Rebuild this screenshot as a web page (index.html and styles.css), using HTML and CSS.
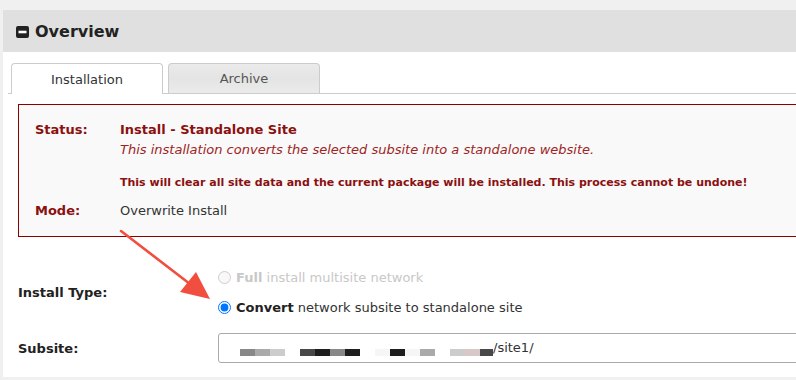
FILE: index.html
```html
<!DOCTYPE html>
<html lang="en">
<head>
<meta charset="utf-8">
<title>Overview</title>
<link rel="stylesheet" href="styles.css">
</head>
<body>
<div class="panel">
  <div class="panel-head">
    <svg class="head-icon" width="13" height="12" viewBox="0 0 13 12"><rect x="0" y="0" width="13" height="12" rx="2" fill="#222"/><rect x="2.5" y="4.7" width="8" height="2.6" fill="#fff"/></svg>
    <span class="head-title">Overview</span>
  </div>
  <div class="panel-body">
    <div class="tabs">
      <div class="tab active">Installation</div>
      <div class="tab">Archive</div>
    </div>
    <div class="status-box">
      <div class="srow">
        <div class="slabel">Status:</div>
        <div class="sval">
          <div class="stitle">Install - Standalone Site</div>
          <div class="sdesc">This installation converts the selected subsite into a standalone website.</div>
          <div class="swarn">This will clear all site data and the current package will be installed. This process cannot be undone!</div>
        </div>
      </div>
      <div class="srow mode">
        <div class="slabel">Mode:</div>
        <div class="sval plain">Overwrite Install</div>
      </div>
    </div>
    <div class="frow types">
      <div class="flabel">Install Type:</div>
      <div class="options">
        <label class="opt disabled"><input type="radio" name="t" disabled><span><b>Full</b> install multisite network</span></label>
        <label class="opt"><input type="radio" name="t" checked><span><b>Convert</b> network subsite to standalone site</span></label>
      </div>
    </div>
    <div class="frow subsite">
      <div class="flabel">Subsite:</div>
      <div class="field">
        <span class="px c88"></span><span class="px caa"></span><span class="px ccc"></span><span class="px"></span>
        <span class="px c48"></span><span class="px c1e"></span><span class="px c88"></span><span class="px c1e"></span><span class="px"></span>
        <span class="px cf6"></span><span class="px c1e"></span><span class="px cf6"></span><span class="px caa"></span><span class="px"></span>
        <span class="px ccc"></span><span class="px cpk"></span><span class="px c48 narrow"></span><span class="path">/site1/</span>
      </div>
    </div>
  </div>
</div>
<svg class="arrow" width="796" height="380" viewBox="0 0 796 380">
  <line x1="121" y1="231" x2="190" y2="284" stroke="#f24e3f" stroke-width="2.6" stroke-linecap="round"/>
  <polygon points="210,299 180,292 196,272" fill="#f24e3f"/>
</svg>
</body>
</html>
```

FILE: styles.css
```css
html, body {
  margin: 0;
  padding: 0;
}
body {
  background: #f0f0f0;
  width: 796px;
  height: 380px;
  overflow: hidden;
  position: relative;
  font-family: "DejaVu Sans", Verdana, sans-serif;
  font-size: 13px;
  color: #333;
}
.panel {
  margin: 10px 0 0 3px;
  width: 900px;
}
.panel-head {
  height: 42px;
  background: #e0e0e0;
  display: flex;
  align-items: center;
  padding-left: 13px;
}
.head-icon {
  margin-top: 2px;
}
.head-title {
  margin-left: 6px;
  font-size: 16px;
  font-weight: bold;
  color: #222;
}
.panel-body {
  background: #fff;
  padding: 11px 0 14px 0;
}
.tabs {
  margin-left: 5px;
  display: flex;
  gap: 5px;
  padding-left: 3px;
  border-bottom: 1px solid #ccc;
  height: 30px;
}
.tab {
  width: 150px;
  height: 29px;
  border: 1px solid #ccc;
  border-bottom: none;
  border-radius: 4px 4px 0 0;
  display: flex;
  align-items: center;
  justify-content: center;
  background: linear-gradient(#ebebeb, #e4e4e4 50%, #ebebeb);
  color: #555;
  box-sizing: content-box;
}
.tab.active {
  background: #fff;
  color: #333;
  height: 30px;
  margin-bottom: -1px;
}
.status-box {
  margin: 10px 0 0 15px;
  border: 1px solid #8b0000;
  background: #f9f9f9;
  padding: 15px 0 15px 16px;
}
.srow {
  display: flex;
}
.slabel {
  width: 85px;
  line-height: 20px;
  font-weight: bold;
  color: #8b1010;
}
.stitle {
  line-height: 20px;
  font-weight: bold;
  color: #8b1010;
}
.sdesc {
  line-height: 20px;
  font-style: italic;
  color: #9d2424;
}
.swarn {
  margin-top: 15px;
  line-height: 16px;
  font-size: 11px;
  font-weight: bold;
  color: #8b1010;
}
.srow.mode {
  margin-top: 10px;
}
.sval.plain {
  line-height: 20px;
  color: #333;
}
.frow {
  display: grid;
  grid-template-columns: 200px 1fr;
  align-items: center;
  padding-left: 15px;
}
.flabel {
  font-weight: bold;
  color: #222;
}
.frow.types {
  margin-top: 25px;
}
.options {
  display: flex;
  flex-direction: column;
}
.opt {
  height: 30px;
  display: flex;
  align-items: center;
  color: #333;
}
.opt b {
  color: #222;
}
.opt input {
  margin: 0 5px 0 0;
  width: 13px;
  height: 13px;
}
.opt.disabled,
.opt.disabled b {
  color: #c8c8c8;
}
.frow.subsite {
  margin-top: 11px;
}
.field {
  height: 28px;
  border: 1px solid #aaa;
  border-radius: 3px;
  display: flex;
  align-items: center;
  padding-left: 21px;
}
.px {
  width: 15px;
  height: 7px;
  margin-top: 8px;
  flex: none;
}
.px.narrow {
  width: 13px;
}
.c88 { background: #888; }
.caa { background: #aaa; }
.ccc { background: #ccc; }
.c48 { background: #484848; }
.c1e { background: #1e1e1e; }
.cf6 { background: #f6f6f6; }
.cpk { background: #d8c8c8; }
.path {
  color: #333;
  margin-top: -1px;
}
.arrow {
  position: absolute;
  left: 0;
  top: 0;
  pointer-events: none;
}
```
